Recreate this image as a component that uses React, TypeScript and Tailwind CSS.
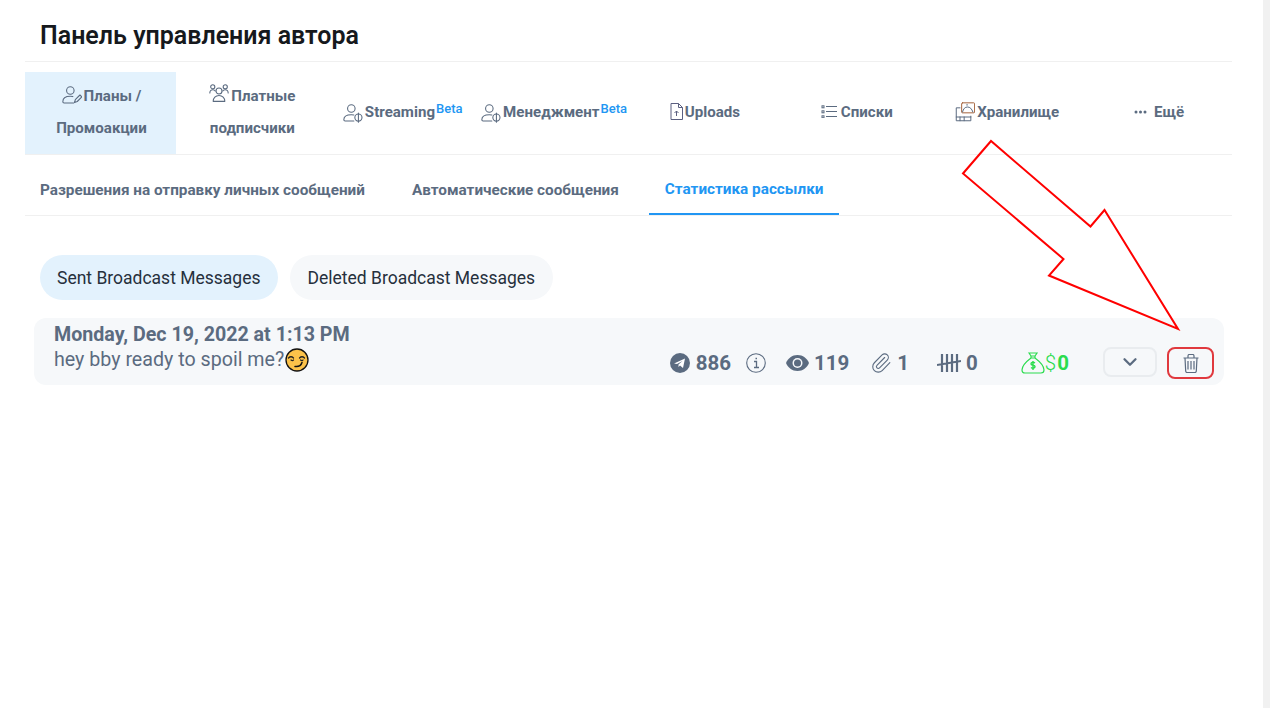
import type { ReactNode } from 'react';
import { ChevronDown, Paperclip } from 'lucide-react';

const iconProps = {
  width: 20,
  height: 20,
  viewBox: '0 0 24 24',
  fill: 'none',
  stroke: 'currentColor',
  strokeWidth: 1.3,
  strokeLinecap: 'round' as const,
  strokeLinejoin: 'round' as const,
};

function UserPen() {
  return (
    <svg {...iconProps} className="mr-[2px] inline-block align-[-4px] text-[#5b6b80]">
      <circle cx="10" cy="6.500" r="4.500" />
      <path d="M1 20c0-4 3.500-6.500 9-6.500 1 0 2 .1 3 .4M1 20c0 1 .5 1.500 1.500 1.500H14" />
      <path d="M15 21l1-3.500 5.500-5.500 2.300 2.300-5.500 5.500z" />
    </svg>
  );
}

function UserGroup() {
  return (
    <svg {...iconProps} className="mr-[2px] inline-block align-[-2px] text-[#5b6b80]">
      <circle cx="12" cy="9.500" r="3.600" />
      <path d="M5 22c0-4 3-7 7-7s7 3 7 7z" />
      <circle cx="4.500" cy="4.500" r="2.500" />
      <circle cx="19.500" cy="4.500" r="2.500" />
      <path d="M1 12c0-2 1.500-4 3.500-4 1.500 0 2.500.5 3 1.500M23 12c0-2-1.500-4-3.500-4-1.500 0-2.500.5-3 1.500" />
    </svg>
  );
}

function UserShield() {
  return (
    <svg {...iconProps} className="mr-[2px] inline-block align-[-6px] text-[#5b6b80]">
      <circle cx="10" cy="6.500" r="4.500" />
      <path d="M1 20c0-4 3.500-6 9-6 1 0 2 .1 3 .4M1 20c0 1 .5 1.500 1.500 1.500H13" />
      <circle cx="18.500" cy="17.500" r="4.300" />
      <path d="M18.500 12v11" />
    </svg>
  );
}

function FileUp() {
  return (
    <svg width="13" height="17" viewBox="0 0 13 17" fill="none" stroke="#5b5f80" strokeWidth="1" className="mr-[2px] inline-block align-[-3px]">
      <path d="M1 .5h7.500l4 4v12H1z" />
      <path d="M8.500.5v4h4M6.500 13V8M4.500 10l2-2 2 2" />
    </svg>
  );
}

function ListBullets() {
  return (
    <svg width="16" height="13" viewBox="0 0 16 13" fill="none" stroke="#5b6b80" strokeWidth="1.200" className="mr-[4px] inline-block align-[-1px]">
      <path d="M5 1.500h11M5 6.500h11M5 11.500h11" />
      <rect x="1" y=".8" width="2" height="2" strokeWidth="1" />
      <rect x="1" y="5.800" width="2" height="2" strokeWidth="1" />
      <rect x="1" y="10.800" width="2" height="2" strokeWidth="1" />
    </svg>
  );
}

function Storage() {
  return (
    <svg {...iconProps} className="mr-[2px] inline-block align-[-5px] text-[#5b6b80]" strokeWidth="1.200">
      <rect x="8" y="1" width="15.500" height="12" rx="1" stroke="#a5633c" />
      <path d="M9 12c1-4 3-6 6-6s5 2 6.500 6M14 3.500h1" />
      <path d="M6 7H1.500v15.500H19V17M1.500 18H19M6 18v4.500M11 18v4.500" />
    </svg>
  );
}

function SmirkEmoji() {
  return (
    <svg width="24" height="24" viewBox="0 0 24 24" className="ml-px inline-block">
      <circle cx="12" cy="12" r="11" fill="#fbc24a" stroke="#111" strokeWidth="1.300" />
      <path d="M3.500 10c1.500-1.500 3.500-1.500 5 0M14.500 10c1.500-1.500 3.500-1.500 5 0" fill="none" stroke="#222" strokeWidth="1.300" strokeLinecap="round" />
      <path d="M6 12c1 .8 2 .8 2.500 0M15.500 12c1 .8 2 .8 2.500 0" fill="none" stroke="#222" strokeWidth="1.200" strokeLinecap="round" />
      <path d="M10 18.500c3.500 .5 6-1 7-4" fill="none" stroke="#111" strokeWidth="1.500" strokeLinecap="round" />
    </svg>
  );
}

function Tab({ children, active, className = '' }: { children: ReactNode; active?: boolean; className?: string }) {
  return (
    <div
      className={`flex h-[82px] items-center justify-center px-[30px] pb-[3px] text-center text-[15.1px] leading-8 font-bold text-[#5b6b80] ${
        active ? 'bg-[#e3f2fd]' : ''
      } ${className}`}
    >
      <div>{children}</div>
    </div>
  );
}

function Beta() {
  return <sup className="-top-[4px] ml-px align-baseline text-[13px] font-medium text-[#2196f3]">Beta</sup>;
}

export default function App() {
  return (
    <div className="relative flex h-[708px] overflow-hidden bg-white font-['Roboto',sans-serif]">
      <main className="w-[1263px] pr-[31px] pl-[25px]">
        <h1 className="h-[62px] border-b border-[#f0f0f0] pt-[18px] pl-[15px] text-[25px] leading-[36px] font-semibold text-[#16191d]">
          Панель управления автора
        </h1>

        <div className="grid grid-cols-8 border-b border-[#f0f0f0] pt-[10px]">
          <Tab active className="pl-[32px]">
            <UserPen />
            Планы / Промоакции
          </Tab>
          <Tab className="pl-[32px]">
            <UserGroup />
            Платные подписчики
          </Tab>
          <Tab className="pl-[31px]">
            <span className="whitespace-nowrap">
              <UserShield />
              Streaming
              <Beta />
            </span>
          </Tab>
          <Tab className="pl-[32px]">
            <span className="-mx-6 whitespace-nowrap">
              <UserShield />
              Менеджмент
              <Beta />
            </span>
          </Tab>
          <Tab className="pl-[32px]">
            <FileUp />
            Uploads
          </Tab>
          <Tab className="pl-[34px]">
            <ListBullets />
            Списки
          </Tab>
          <Tab className="pl-[33px]">
            <span className="whitespace-nowrap">
              <Storage />
              Хранилище
            </span>
          </Tab>
          <Tab className="pl-[35px]">
            <span className="whitespace-nowrap">
              <svg width="13" height="4" viewBox="0 0 13 4" fill="#5b6b80" className="mr-[7px] inline-block align-[3px]">
                <circle cx="2" cy="2" r="1.500" />
                <circle cx="6.500" cy="2" r="1.500" />
                <circle cx="11" cy="2" r="1.500" />
              </svg>
              Ещё
            </span>
          </Tab>
        </div>

        <div className="flex h-[61px] gap-[14px] border-b border-[#f0f0f0] text-[15.3px] font-bold text-[#5b6b80]">
          <div className="flex items-center pt-[11px] pr-[17px] pl-[15px]">Разрешения на отправку личных сообщений</div>
          <div className="flex items-center px-[16px] pt-[11px]">Автоматические сообщения</div>
          <div className="flex items-center border-b-2 border-[#2196f3] px-[16px] pt-[11px] text-[#2196f3]">
            Статистика рассылки
          </div>
        </div>

        <div className="mt-[39px] flex gap-3 pl-[15px] text-[17.5px] text-[#26303c]">
          <div className="flex h-[45px] items-center rounded-full bg-[#e3f2fd] px-[17px] pt-[2px]">Sent Broadcast Messages</div>
          <div className="flex h-[45px] items-center rounded-full bg-[#f6f8fa] px-[18px] pt-[2px]">Deleted Broadcast Messages</div>
        </div>

        <div className="mt-[18px] ml-[9px] flex h-[67px] w-[1190px] rounded-xl bg-[#f6f8fa] pl-5 text-[#5b6b80]">
          <div className="pt-[5px] text-[19.65px] leading-[24px]">
            <div className="font-bold">Monday, Dec 19, 2022 at 1:13 PM</div>
            <div className="mt-px flex items-center">
              hey bby ready to spoil me?
              <SmirkEmoji />
            </div>
          </div>
          <div className="ml-auto flex h-full items-end pr-[10px] pb-[6px] text-[20.5px] font-bold">
            <div className="mb-[1px] flex h-[30px] items-center">
              <svg width="20" height="20" viewBox="0 0 20 20" className="mr-[6px]">
                <circle cx="10" cy="10" r="10" fill="#5b6b80" />
                <path d="M4 10.500l11-5-2 9.500-3-2.500-1.500 1.500V11.500l4-3.500-5.500 3z" fill="#fff" />
              </svg>
              886
              <svg width="20" height="20" viewBox="0 0 20 20" fill="none" stroke="#5b6b80" className="ml-[15px]">
                <circle cx="10" cy="10" r="9.300" strokeWidth="1.100" />
                <path d="M8 8.500h2.500V14M8 14.500h5M9.500 5.500h1.500" strokeWidth="1.300" />
              </svg>
              <svg width="23" height="16" viewBox="0 0 23 16" className="ml-[20px]">
                <path d="M11.500 0C6 0 2 3.500 0 8c2 4.500 6 8 11.500 8S21 12.500 23 8c-2-4.500-6-8-11.500-8z" fill="#5b6b80" />
                <circle cx="11.500" cy="8" r="5" fill="#f6f8fa" />
                <circle cx="11.500" cy="8" r="3.500" fill="#5b6b80" />
              </svg>
              <span className="ml-[5px]">119</span>
              <Paperclip size={22} strokeWidth={1.200} className="ml-[21px]" />
              <span className="ml-[5px]">1</span>
              <svg width="24" height="20" viewBox="0 0 24 20" className="ml-[28px]" stroke="#5b6b80" strokeWidth="2.200" fill="none">
                <path d="M5 1v18M10 1v18M15 1v18M20 1v18M0 12l24-4" />
              </svg>
              <span className="ml-[5px]">0</span>
              <svg width="24" height="24" viewBox="0 0 24 24" className="ml-[43px]" fill="none" stroke="#2bdc4e" strokeWidth="1.200">
                <path d="M8 2l2 3h4l2-3zM10 5v2M14 5v2M10 7h4c4 3 9 8 9 12 0 2-1 3-3 3H4c-2 0-3-1-3-3 0-4 5-9 9-12z" />
                <path d="M14 12c-2-1.500-4-.5-4 1s4 1 4 2.500-2 2.500-4 1M12 10v9" strokeWidth="1.400" />
              </svg>
              <span className="font-light text-[#2bdc4e]">$</span>
              <span className="ml-px text-[#2bdc4e]">0</span>
            </div>
            <div className="mb-[2px] ml-[34px] flex h-[30px] w-[54px] items-center justify-center rounded-lg border-2 border-[#e9ecef]">
              <ChevronDown size={22} strokeWidth={2.500} />
            </div>
            <div className="ml-[10px] flex h-[32px] w-[47px] items-center justify-center rounded-lg border-2 border-[#e0393e]">
              <svg width="16" height="19" viewBox="0 0 16 19" fill="none" stroke="#5b6b80" strokeWidth="1.200">
                <path d="M.5 4h15M5 4V2c0-.8.5-1.500 1.200-1.500h3.600c.7 0 1.200.7 1.200 1.500v2M2 4l.7 13c0 1 .6 1.500 1.500 1.500h7.600c.9 0 1.500-.5 1.500-1.500L14 4M5 7v8.500M8 7v8.500M11 7v8.500" />
              </svg>
            </div>
          </div>
        </div>
      </main>
      <div className="w-[7px] bg-[#f1f1f1]" />

      {/* annotation drawn over the page */}
      <svg width="1270" height="708" className="pointer-events-none absolute top-0 left-0">
        <polygon
          points="991,141 963,173.500 1063.500,259 1049,275.500 1178,329 1104.500,210 1090.500,226.500"
          fill="none"
          stroke="#ff0000"
          strokeWidth="2"
        />
      </svg>
    </div>
  );
}
